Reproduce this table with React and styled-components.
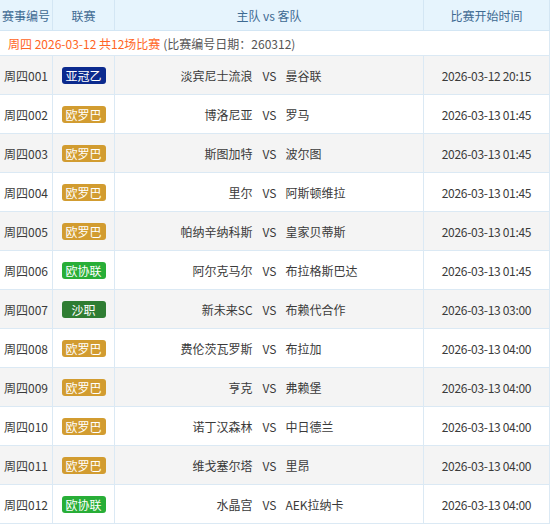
import React from 'react';
import styled, { createGlobalStyle } from 'styled-components';

const GlobalStyle = createGlobalStyle`
  body {
    margin: 0;
    background: #fff;
    font-family: "Noto Sans CJK SC", "Liberation Sans", sans-serif;
    font-size: 12px;
    color: #333;
  }
`;

const matches = [
  { no: '周四001', league: '亚冠乙', home: '淡宾尼士流浪', away: '曼谷联', time: '2026-03-12 20:15' },
  { no: '周四002', league: '欧罗巴', home: '博洛尼亚', away: '罗马', time: '2026-03-13 01:45' },
  { no: '周四003', league: '欧罗巴', home: '斯图加特', away: '波尔图', time: '2026-03-13 01:45' },
  { no: '周四004', league: '欧罗巴', home: '里尔', away: '阿斯顿维拉', time: '2026-03-13 01:45' },
  { no: '周四005', league: '欧罗巴', home: '帕纳辛纳科斯', away: '皇家贝蒂斯', time: '2026-03-13 01:45' },
  { no: '周四006', league: '欧协联', home: '阿尔克马尔', away: '布拉格斯巴达', time: '2026-03-13 01:45' },
  { no: '周四007', league: '沙职', home: '新未来SC', away: '布赖代合作', time: '2026-03-13 03:00' },
  { no: '周四008', league: '欧罗巴', home: '费伦茨瓦罗斯', away: '布拉加', time: '2026-03-13 04:00' },
  { no: '周四009', league: '欧罗巴', home: '亨克', away: '弗赖堡', time: '2026-03-13 04:00' },
  { no: '周四010', league: '欧罗巴', home: '诺丁汉森林', away: '中日德兰', time: '2026-03-13 04:00' },
  { no: '周四011', league: '欧罗巴', home: '维戈塞尔塔', away: '里昂', time: '2026-03-13 04:00' },
  { no: '周四012', league: '欧协联', home: '水晶宫', away: 'AEK拉纳卡', time: '2026-03-13 04:00' },
];

const leagueColors = {
  亚冠乙: '#0b2a8e',
  欧罗巴: '#d29c30',
  欧协联: '#28ae37',
  沙职: '#2f7d33',
};

const Table = styled.div`
  width: 550px;
  display: grid;
  grid-template-columns: 53px 62px 309px 126px;
`;

const HeadCell = styled.div`
  height: 30px;
  display: flex;
  align-items: center;
  justify-content: center;
  background: #e6f4fd;
  color: #3e6a92;
  border-right: 1px solid #d3e6f4;
  border-bottom: 1px solid #d3e6f4;
`;

const GroupRow = styled.div`
  grid-column: 1 / -1;
  height: 24px;
  display: flex;
  align-items: center;
  padding-left: 8px;
  border-right: 1px solid #dbe9f4;
  border-bottom: 1px solid #dbe9f4;
  color: #555;
`;

const GroupDate = styled.span`
  color: #ff6524;
  margin-right: 3px;
`;

const Cell = styled.div`
  height: 38px;
  display: flex;
  align-items: center;
  justify-content: center;
  background: ${(p) => (p.$odd ? '#f4f4f4' : '#fff')};
  border-right: 1px solid #dbe9f4;
  border-bottom: 1px solid #dbe9f4;
  color: #3a3a3a;
  white-space: nowrap;
  letter-spacing: ${(p) => (p.$tight ? '-0.3px' : 'normal')};
`;

const Badge = styled.span`
  width: 44px;
  height: 17px;
  border-radius: 3px;
  background: ${(p) => p.$color};
  color: #fff;
  display: flex;
  align-items: center;
  justify-content: center;
  font-size: 12px;
`;

const Side = styled.span`
  flex: 1;
  text-align: ${(p) => p.$align};
`;

const Vs = styled.span`
  padding: 0 9px 0 10px;
`;

export default function App() {
  return (
    <>
      <GlobalStyle />
      <Table>
        <HeadCell>赛事编号</HeadCell>
        <HeadCell>联赛</HeadCell>
        <HeadCell>主队 vs 客队</HeadCell>
        <HeadCell>比赛开始时间</HeadCell>
        <GroupRow>
          <GroupDate>周四 2026-03-12 共12场比赛</GroupDate>
          (比赛编号日期：260312)
        </GroupRow>
        {matches.map((m, i) => {
          const odd = i % 2 === 0;
          return (
            <React.Fragment key={m.no}>
              <Cell $odd={odd}>{m.no}</Cell>
              <Cell $odd={odd}>
                <Badge $color={leagueColors[m.league]}>{m.league}</Badge>
              </Cell>
              <Cell $odd={odd}>
                <Side $align="right">{m.home}</Side>
                <Vs>VS</Vs>
                <Side $align="left">{m.away}</Side>
              </Cell>
              <Cell $odd={odd} $tight>{m.time}</Cell>
            </React.Fragment>
          );
        })}
      </Table>
    </>
  );
}
